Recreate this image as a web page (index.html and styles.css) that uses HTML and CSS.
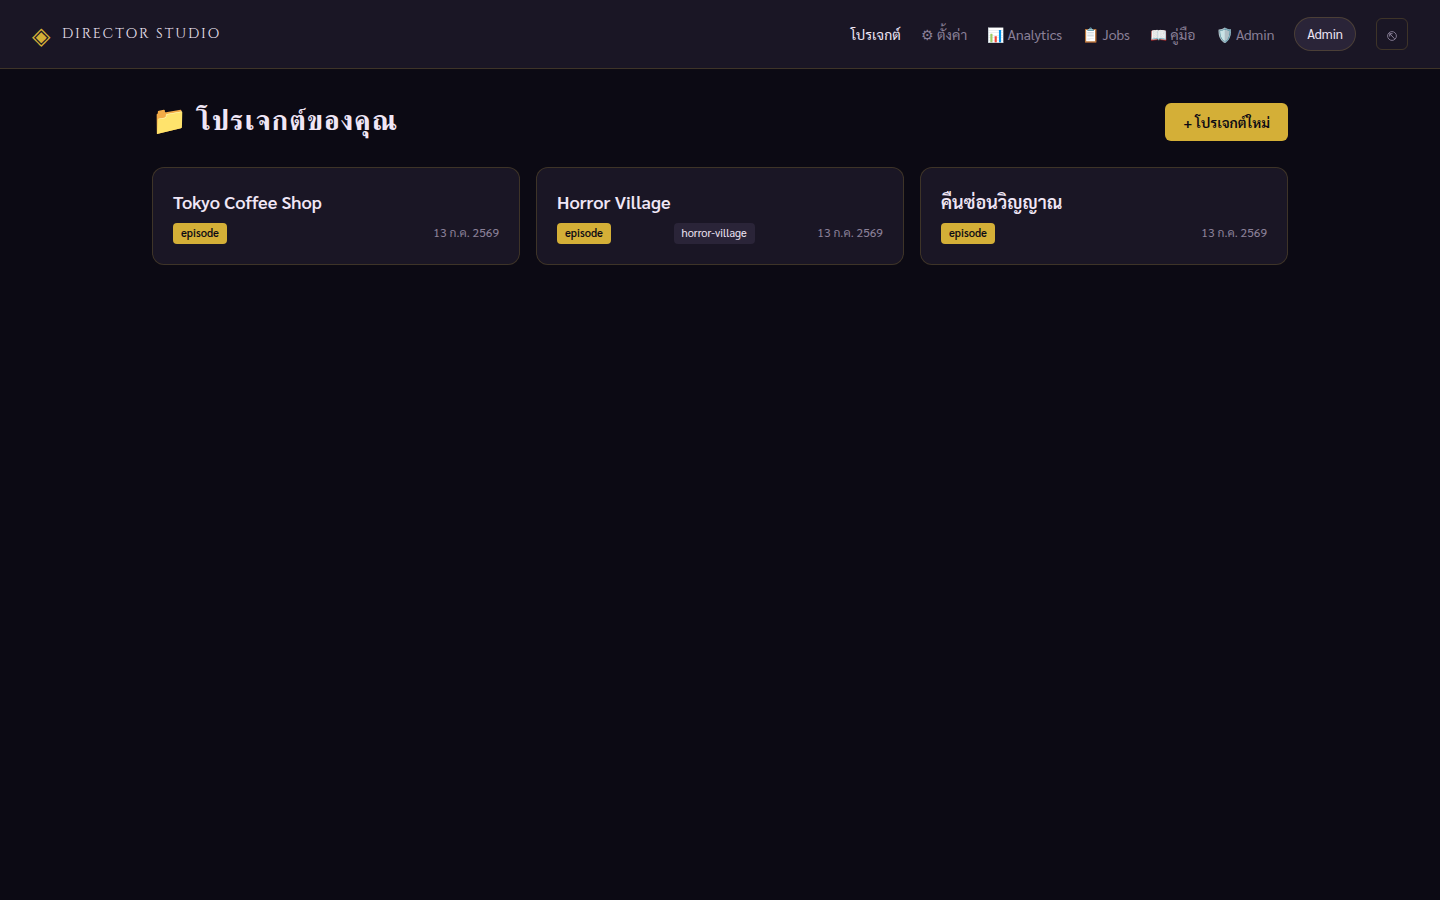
FILE: index.html
```
<!DOCTYPE html>
<html lang="th">
<head>
    <meta charset="UTF-8">
    <meta name="viewport" content="width=device-width, initial-scale=1.0">
    <title>Director Studio</title>
    <link rel="stylesheet" href="styles.css">
</head>
<body>

<header class="topbar">
    <a class="brand" href="#">
        <span class="brand-icon">◈</span>
        <span class="brand-name">DIRECTOR STUDIO</span>
    </a>
    <nav class="nav">
        <a class="nav-link active" href="#">โปรเจกต์</a>
        <a class="nav-link" href="#">⚙ ตั้งค่า</a>
        <a class="nav-link" href="#">📊 Analytics</a>
        <a class="nav-link" href="#">📋 Jobs</a>
        <a class="nav-link" href="#">📖 คู่มือ</a>
        <a class="nav-link" href="#">🛡️ Admin</a>
        <button class="user-btn" type="button">Admin</button>
        <button class="logout-btn" type="button" aria-label="ออกจากระบบ">
            <svg width="10" height="10" viewBox="0 0 10 10" fill="none" stroke="currentColor" aria-hidden="true">
                <circle cx="5" cy="5" r="4.4" stroke-width="0.9"/>
                <path d="M7.6 7.8 2.8 2.8M2.7 5.6V2.7H5.6" stroke-width="1"/>
            </svg>
        </button>
    </nav>
</header>

<main class="container">
    <div class="page-head">
        <h1>📁 โปรเจกต์ของคุณ</h1>
        <button class="btn-primary" type="button">+ โปรเจกต์ใหม่</button>
    </div>

    <div class="project-grid">
        <a class="card" href="#">
            <h3>Tokyo Coffee Shop</h3>
            <div class="card-meta">
                <span class="badge">episode</span>
                <span class="date">13 ก.ค. 2569</span>
            </div>
        </a>
        <a class="card" href="#">
            <h3>Horror Village</h3>
            <div class="card-meta">
                <span class="badge">episode</span>
                <span class="tag">horror-village</span>
                <span class="date">13 ก.ค. 2569</span>
            </div>
        </a>
        <a class="card" href="#">
            <h3>คืนซ่อนวิญญาณ</h3>
            <div class="card-meta">
                <span class="badge">episode</span>
                <span class="date">13 ก.ค. 2569</span>
            </div>
        </a>
    </div>
</main>

</body>
</html>
```
FILE: styles.css
```
:root {
    --bg: #0c0a14;
    --surface: #1a1625;
    --raised: #2a2438;
    --line: rgba(212, 175, 55, 0.2);
    --gold: #d4af37;
    --text: #f0e6f6;
    --muted: #8a8098;
}
* {
    box-sizing: border-box;
}
body {
    margin: 0;
    min-height: 100vh;
    background: var(--bg);
    color: var(--text);
    font-family: Sarabun, "Noto Sans", sans-serif;
    font-size: 14px;
    line-height: 24px;
}
a {
    color: inherit;
    text-decoration: none;
}
button {
    font-family: inherit;
    cursor: pointer;
}
.topbar {
    display: flex;
    justify-content: space-between;
    align-items: center;
    padding: 16px 32px;
    background: var(--surface);
    border-bottom: 1px solid var(--line);
}
.brand {
    display: flex;
    align-items: center;
    gap: 12px;
}
.brand-icon {
    color: var(--gold);
    font-size: 24px;
    line-height: 36px;
}
.brand-name {
    font-family: Cinzel, "Liberation Serif", serif;
    font-size: 14px;
    font-weight: 500;
    letter-spacing: 2px;
}
.nav {
    display: flex;
    align-items: center;
    gap: 20px;
}
.nav-link {
    color: var(--muted);
}
.nav-link.active {
    color: var(--text);
}
.user-btn {
    height: 34px;
    padding: 0 12px 2px;
    background: var(--raised);
    color: var(--text);
    border: 1px solid var(--line);
    border-radius: 20px;
    font-size: 13px;
}
.logout-btn {
    display: flex;
    justify-content: center;
    align-items: center;
    width: 32px;
    height: 32px;
    padding: 4px 0 0;
    background: none;
    color: var(--muted);
    border: 1px solid var(--line);
    border-radius: 6px;
}
.container {
    max-width: 1200px;
    margin: 0 auto;
    padding: 32px;
}
.page-head {
    display: flex;
    justify-content: space-between;
    align-items: center;
    margin-bottom: 24px;
}
h1 {
    margin: 0;
    font-family: Cinzel, FreeSerif, serif;
    font-size: 28px;
    line-height: 42px;
    letter-spacing: 1px;
}
.btn-primary {
    height: 38px;
    padding: 0 18px;
    background: var(--gold);
    color: var(--bg);
    border: none;
    border-radius: 6px;
    font-size: 14px;
    font-weight: 600;
}
.project-grid {
    display: grid;
    grid-template-columns: repeat(auto-fill, minmax(320px, 1fr));
    gap: 16px;
}
.card {
    padding: 20px;
    background: var(--surface);
    border: 1px solid var(--line);
    border-radius: 12px;
}
.card h3 {
    margin: 0 0 8px;
    font-size: 18px;
    line-height: 27px;
    font-weight: 600;
}
.card-meta {
    display: flex;
    justify-content: space-between;
    align-items: center;
    font-size: 12px;
    line-height: 16px;
}
.badge,
.tag {
    padding: 2px 8px 3px;
    border-radius: 4px;
    font-size: 11px;
}
.badge {
    background: var(--gold);
    color: var(--bg);
    font-weight: 600;
}
.tag {
    background: var(--raised);
    color: var(--text);
}
.date {
    padding-bottom: 3px;
    color: var(--muted);
}
```
